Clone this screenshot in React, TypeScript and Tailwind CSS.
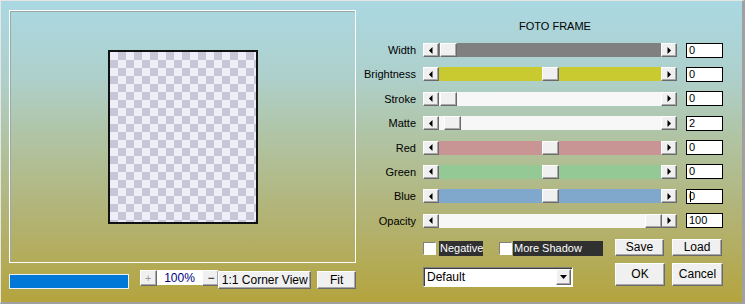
import React from "react";

const raised =
  "bg-[#f0f0f0] border border-t-white border-l-white border-r-[#6a6a6a] border-b-[#6a6a6a] shadow-[inset_-1px_-1px_0_#a8a8a8]";

function LeftArrow() {
  return (
    <svg width="4" height="7" viewBox="0 0 4 7">
      <polygon points="3.5,0 0,3.5 3.5,7" fill="#000" />
    </svg>
  );
}
function RightArrow() {
  return (
    <svg width="4" height="7" viewBox="0 0 4 7">
      <polygon points="0.5,0 4,3.5 0.5,7" fill="#000" />
    </svg>
  );
}

type Row = { label: string; track: string; thumb: number; value: string; caret?: boolean };

const rows: Row[] = [
  { label: "Width", track: "bg-[#808080]", thumb: 1, value: "0" },
  { label: "Brightness", track: "bg-[#c9c930]", thumb: 103, value: "0" },
  { label: "Stroke", track: "bg-[#f7f7f7]", thumb: 1, value: "0" },
  { label: "Matte", track: "bg-[#f7f7f7]", thumb: 5, value: "2" },
  { label: "Red", track: "bg-[#c89494]", thumb: 103, value: "0" },
  { label: "Green", track: "bg-[#94c894]", thumb: 103, value: "0" },
  { label: "Blue", track: "bg-[#80a8cc]", thumb: 103, value: "0", caret: true },
  { label: "Opacity", track: "bg-[#f7f7f7]", thumb: 206, value: "100" },
];

function Slider({ r }: { r: Row }) {
  return (
    <div className="flex h-[14px] items-center">
      <div className="w-[56px] text-right leading-[14px]">{r.label}</div>
      <div className="ml-[7px] flex h-[14px] w-[254px]">
        <div className={`${raised} flex h-[14px] w-[16px] items-center justify-center`}>
          <LeftArrow />
        </div>
        <div className={`relative h-[14px] flex-1 ${r.track}`}>
          <div
            className={`${raised} absolute top-0 h-[14px] w-[17px]`}
            style={{ left: r.thumb }}
          />
        </div>
        <div className={`${raised} flex h-[14px] w-[16px] items-center justify-center`}>
          <RightArrow />
        </div>
      </div>
      <div className="ml-[9px] flex h-[15px] w-[37px] items-center border border-black bg-white pl-[2px] leading-[13px]">
        {r.value}
        {r.caret && <span className="ml-[-5px] inline-block h-[11px] w-px bg-black" />}
      </div>
    </div>
  );
}

export default function App() {
  return (
    <div
      className="flex h-[304px] w-[745px] border-t border-l border-t-[#e6e6e6] border-l-[#e6e6e6] border-r-[3px] border-b-[2px] border-r-[#a0a0a0] border-b-[#a0a0a0] bg-[linear-gradient(to_bottom,#aad8e2_0%,#aed0cc_25%,#b0c4a4_45%,#b2b478_70%,#b4a43e_100%)] text-[11px] text-black"
      style={{ fontFamily: '"Liberation Sans", Arial, sans-serif' }}
    >
      {/* Left column */}
      <div className="ml-[8px] mt-[9px] flex w-[347px] flex-col">
        <div className="flex h-[253px] w-[347px] items-center justify-center border border-white shadow-[inset_1px_1px_0_#9aa8a8]">
          <div className="h-[174px] w-[150px] border-2 border-[#111] bg-[conic-gradient(#c6c6d6_25%,#eeeef8_0_50%,#c6c6d6_0_75%,#eeeef8_0)] bg-size-[16px_16px]" />
        </div>
        <div className="mt-[6px] flex h-[20px] items-start">
          <div className="mt-[5px] h-[15px] w-[120px] border border-[#e8f0f8] bg-[#0078d7]" />
          <div className={`${raised} ml-[11px] mt-[1px] flex h-[16px] w-[17px] items-center justify-center text-[11px] leading-none text-[#9a9a9a]`}>
            +
          </div>
          <div className="mt-[1px] flex h-[15px] w-[46px] items-center justify-center bg-white text-[12px] leading-none text-[#000080]">
            100%
          </div>
          <div className={`${raised} mt-[1px] flex h-[16px] w-[17px] items-center justify-center text-[12px] leading-none`}>
            −
          </div>
          <div className={`${raised} ml-[-1px] mt-[2px] flex h-[18px] w-[93px] items-center justify-center text-[12px] leading-none`}>
            1:1 Corner View
          </div>
          <div className={`${raised} ml-[6px] mt-[2px] flex h-[18px] w-[39px] items-center justify-center text-[12px] leading-none`}>
            Fit
          </div>
        </div>
      </div>

      {/* Right column */}
      <div className="ml-[4px] flex flex-1 flex-col">
        <div className="h-[42px] pt-[18px]">
          <div className="ml-[63px] w-[264px] text-center leading-[14px]">FOTO FRAME</div>
        </div>
        <div className="flex flex-col gap-[10.4px]">
          {rows.map((r) => (
            <Slider key={r.label} r={r} />
          ))}
        </div>
        <div className="mt-[11px] flex">
          <div className="ml-[63px] flex w-[180px] flex-col">
            <div className="mt-[2px] flex h-[15px] items-center">
              <div className="h-[13px] w-[13px] border border-t-[#808080] border-l-[#808080] border-r-white border-b-white bg-white" />
              <div className="ml-[3px] flex h-[15px] w-[44px] items-center bg-[#303030] pl-[1px] text-white">
                Negative
              </div>
              <div className="ml-[16px] h-[13px] w-[13px] border border-t-[#808080] border-l-[#808080] border-r-white border-b-white bg-white" />
              <div className="ml-px flex h-[15px] w-[90px] items-center bg-[#303030] pl-[1px] text-white">
                More Shadow
              </div>
            </div>
            <div className="mt-[11px] flex h-[20px] w-[150px] items-center border border-t-[#808080] border-l-[#808080] border-r-white border-b-white bg-white shadow-[inset_1px_1px_0_#404040]">
              <div className="flex-1 pl-[3px] text-[12px] leading-none">Default</div>
              <div className={`${raised} mr-px flex h-[16px] w-[15px] items-center justify-center`}>
                <svg width="7" height="4" viewBox="0 0 7 4">
                  <polygon points="0,0 7,0 3.5,4" fill="#000" />
                </svg>
              </div>
            </div>
          </div>
          <div className="ml-[12px] flex flex-col">
            <div className="flex gap-[8px]">
              <div className={`${raised} flex h-[17px] w-[49px] items-center justify-center text-[12px] leading-none`}>
                Save
              </div>
              <div className={`${raised} flex h-[17px] w-[50px] items-center justify-center text-[12px] leading-none`}>
                Load
              </div>
            </div>
            <div className="mt-[7px] flex gap-[7px]">
              <div className={`${raised} flex h-[23px] w-[50px] items-center justify-center text-[12px] leading-none`}>
                OK
              </div>
              <div className={`${raised} flex h-[23px] w-[51px] items-center justify-center text-[12px] leading-none`}>
                Cancel
              </div>
            </div>
          </div>
        </div>
      </div>
    </div>
  );
}
